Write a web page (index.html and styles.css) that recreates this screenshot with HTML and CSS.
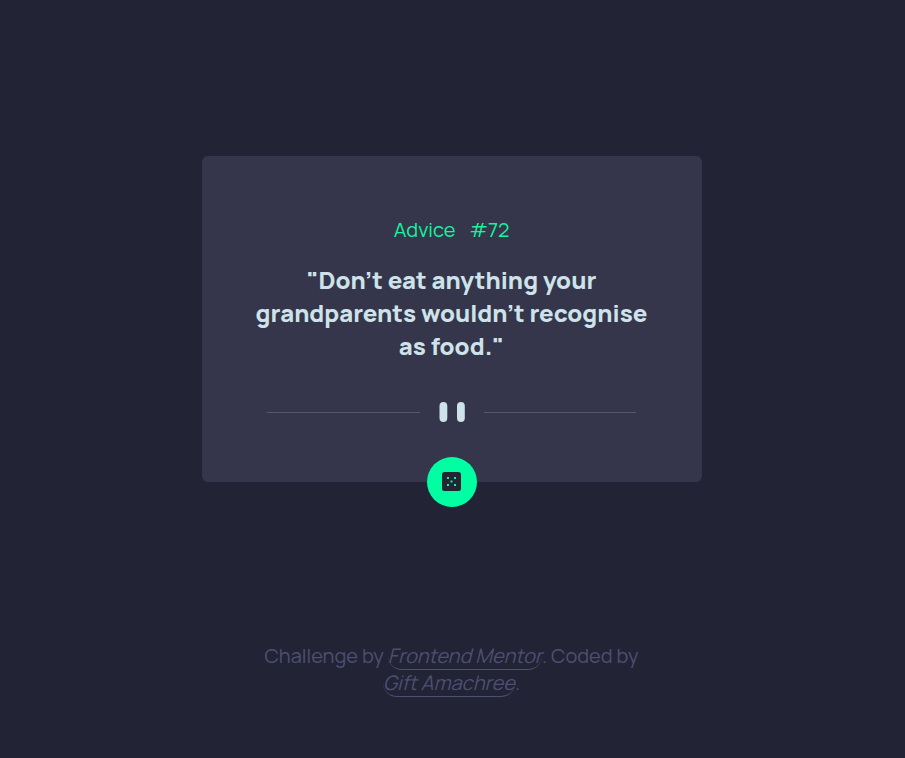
FILE: index.html
```html
<!DOCTYPE html>
<html lang="en"><head><meta charset="utf-8"><title>Advice generator</title><link rel="stylesheet" href="styles.css"></head>
<body>
<main class="card">
<h1 class="label"><span>Advice</span><span>#72</span></h1>
<blockquote class="quote"><span class="line">"Don’t eat anything your</span><span class="line">grandparents wouldn’t recognise</span><span class="line">as food."</span></blockquote>
<svg class="divider" width="370" height="20" viewBox="0 0 370 20"><path d="M0 10.5h153M217 10.5h152" stroke="#54576f"/><g fill="#cee3e9"><rect x="172.500" width="7.800" height="20" rx="3.900"/><rect x="190" width="7.800" height="20" rx="3.900"/></g></svg>
<button class="dice" aria-label="New advice"><svg width="19" height="19" viewBox="0 0 19 19"><rect width="19" height="19" rx="2.500" fill="#202733"/><path fill="#2be5a8" d="M5 5h2v2H5zM12 5h2v2h-2zM8.500 8.500h2v2h-2zM5 12h2v2H5zM12 12h2v2h-2z"/></svg></button>
</main>
<footer class="credit"><div>Challenge by <a>Frontend Mentor</a>. Coded by</div><div><a>Gift Amachree</a>.</div></footer>
</body></html>
```
FILE: styles.css
```css
*{box-sizing:border-box}
body{margin:0;height:758px;padding-top:156px;background:#222334;font-family:Manrope,Inter,"Open Sans",sans-serif;overflow:hidden}
.card{position:relative;width:500px;height:326px;margin-left:202px;padding-top:60px;border-radius:6px;background:#35364b;display:flex;flex-direction:column;align-items:center}
.label{margin:0 1px 0 0;display:flex;gap:14px;font-size:20px;line-height:27px;font-weight:400;color:#14f59c}
.quote{margin:20px 1px 0 0;font-size:24px;line-height:33px;font-weight:800;color:#cee3e9;text-align:center;white-space:nowrap}
.line{display:block}
.divider{margin-top:40px}
.dice{position:absolute;left:225px;bottom:-25px;width:50px;height:50px;padding:0 1px 1px 0;border:0;border-radius:50%;background:#00ffa3;display:flex;align-items:center;justify-content:center}
.credit{margin-top:160px;width:903px;text-align:center;font-size:20px;line-height:27px;font-weight:400;color:#4e4f72}
.credit a{font-style:italic;border-bottom:1px solid;border-radius:15px}
```
